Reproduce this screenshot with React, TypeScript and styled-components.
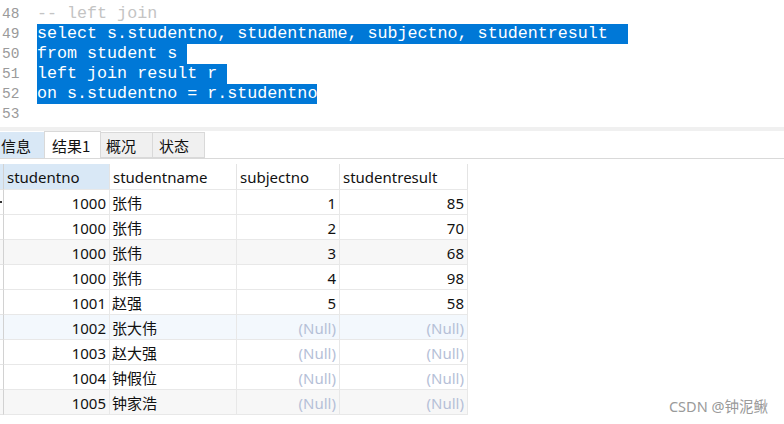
import React from "react";
import styled, { createGlobalStyle } from "styled-components";

const GlobalStyle = createGlobalStyle`
  html, body { margin: 0; padding: 0; background: #fff; }
  body { width: 784px; height: 424px; overflow: hidden; }
`;

const Page = styled.div`
  position: relative;
  width: 784px;
  height: 424px;
  display: flex;
  flex-direction: column;
  background: #fff;
  font-family: "Noto Sans", "Noto Sans CJK SC", sans-serif;
`;

const Editor = styled.div`
  height: 127px;
  padding-top: 4px;
  box-sizing: border-box;
  display: flex;
  flex-direction: column;
`;

const Line = styled.div`
  display: flex;
  align-items: center;
  height: 20px;
`;

const LineNo = styled.span`
  width: 37px;
  padding-left: 2px;
  box-sizing: border-box;
  font-family: "Liberation Mono", monospace;
  font-size: 14.5px;
  color: #9a9a9a;
`;

const Code = styled.span<{ $sel?: boolean; $nl?: boolean; $comment?: boolean }>`
  font-family: "Liberation Mono", monospace;
  font-size: 16.7px;
  line-height: 20px;
  height: 20px;
  white-space: pre;
  color: ${(p) => (p.$sel ? "#ffffff" : p.$comment ? "#c4c4c4" : "#000")};
  background: ${(p) => (p.$sel ? "#0078d7" : "transparent")};
  padding-right: ${(p) => (p.$nl ? "10px" : "0")};
`;

const Band = styled.div`
  height: 4px;
  background: #f0f0f0;
`;

const TabBar = styled.div`
  height: 28px;
  box-sizing: border-box;
  border-bottom: 1px solid #d9d9d9;
  display: flex;
  align-items: flex-end;
  overflow: hidden;
`;

const Tab = styled.div<{ $kind: "hover" | "active" | "idle"; $w: number; $pad: number }>`
  width: ${(p) => p.$w}px;
  height: ${(p) => (p.$kind === "active" ? 28 : 26)}px;
  margin-bottom: ${(p) => (p.$kind === "active" ? -1 : 0)}px;
  box-sizing: border-box;
  padding-left: ${(p) => p.$pad}px;
  display: flex;
  align-items: center;
  font-family: "Noto Sans CJK SC", sans-serif;
  font-size: 15px;
  color: #111;
  white-space: nowrap;
  background: ${(p) =>
    p.$kind === "hover" ? "#d9e8f6" : p.$kind === "active" ? "#fff" : "#f0f0f0"};
  border: ${(p) => (p.$kind === "hover" ? "none" : "1px solid #d9d9d9")};
  border-bottom: ${(p) => (p.$kind === "active" ? "1px solid #fff" : p.$kind === "hover" ? "none" : "1px solid #d9d9d9")};
  border-left: ${(p) => (p.$kind === "idle" ? "none" : undefined)};
`;

const Grid = styled.div`
  margin-top: 5px;
  display: grid;
  grid-template-columns: 4px 106px 127px 103px 128px;
  width: 468px;
`;

const Cell = styled.div<{ $bg?: string; $right?: boolean; $null?: boolean; $head?: boolean }>`
  height: ${(p) => (p.$head ? 26 : 25)}px;
  box-sizing: border-box;
  border-right: 1px solid ${(p) => (p.$head ? "#e4e4e4" : "#e8e8e8")};
  border-bottom: 1px solid #e8e8e8;
  background: ${(p) => p.$bg || "#fff"};
  display: flex;
  align-items: center;
  justify-content: ${(p) => (p.$right ? "flex-end" : "flex-start")};
  padding: ${(p) => (p.$head ? "1px 4px 0 3px" : "1px 3px 0 2px")};
  font-family: "Noto Sans", "Noto Sans CJK SC", sans-serif;
  font-size: 15px;
  color: ${(p) => (p.$null ? "#b5c0d7" : "#111")};
  white-space: nowrap;
  overflow: hidden;
`;

const Strip = styled.div<{ $bg?: string; $head?: boolean }>`
  position: relative;
  height: ${(p) => (p.$head ? 26 : 25)}px;
  box-sizing: border-box;
  border-right: 1px solid #d2d2d2;
  border-bottom: 1px solid #e4e4e4;
  background: ${(p) => p.$bg || "#fff"};
`;

const Marker = styled.span`
  position: absolute;
  left: 0;
  top: 11px;
  width: 2px;
  height: 2px;
  background: #333;
`;

const Watermark = styled.div`
  position: absolute;
  right: 16px;
  bottom: 8px;
  font-family: "Noto Sans", "Noto Sans CJK SC", sans-serif;
  font-size: 14.5px;
  color: #9a9a9a;
`;

type Row = { no: string; name: string; sub: string | null; res: string | null; bg?: string };

const rows: Row[] = [
  { no: "1000", name: "张伟", sub: "1", res: "85" },
  { no: "1000", name: "张伟", sub: "2", res: "70" },
  { no: "1000", name: "张伟", sub: "3", res: "68", bg: "#f7f7f7" },
  { no: "1000", name: "张伟", sub: "4", res: "98" },
  { no: "1001", name: "赵强", sub: "5", res: "58" },
  { no: "1002", name: "张大伟", sub: null, res: null, bg: "#f3f8fd" },
  { no: "1003", name: "赵大强", sub: null, res: null },
  { no: "1004", name: "钟假位", sub: null, res: null },
  { no: "1005", name: "钟家浩", sub: null, res: null, bg: "#f7f7f7" },
];

export default function App() {
  return (
    <Page>
      <GlobalStyle />
      <Editor>
        <Line>
          <LineNo>48</LineNo>
          <Code $comment>-- left join</Code>
        </Line>
        <Line>
          <LineNo>49</LineNo>
          <Code $sel $nl>select s.studentno, studentname, subjectno, studentresult </Code>
        </Line>
        <Line>
          <LineNo>50</LineNo>
          <Code $sel $nl>from student s</Code>
        </Line>
        <Line>
          <LineNo>51</LineNo>
          <Code $sel $nl>left join result r</Code>
        </Line>
        <Line>
          <LineNo>52</LineNo>
          <Code $sel>on s.studentno = r.studentno</Code>
        </Line>
        <Line>
          <LineNo>53</LineNo>
        </Line>
      </Editor>
      <Band />
      <TabBar>
        <Tab $kind="hover" $w={44} $pad={1}>信息</Tab>
        <Tab $kind="active" $w={57} $pad={7}>结果1</Tab>
        <Tab $kind="idle" $w={52} $pad={5}>概况</Tab>
        <Tab $kind="idle" $w={52} $pad={6}>状态</Tab>
      </TabBar>
      <Grid>
        <Strip $head $bg="#d9e8f6" />
        <Cell $head $bg="#d9e8f6">studentno</Cell>
        <Cell $head>studentname</Cell>
        <Cell $head>subjectno</Cell>
        <Cell $head>studentresult</Cell>
        {rows.map((r, i) => (
          <React.Fragment key={i}>
            <Strip $bg={r.bg}>{i === 0 && <Marker />}</Strip>
            <Cell $bg={r.bg} $right>{r.no}</Cell>
            <Cell $bg={r.bg}>{r.name}</Cell>
            <Cell $bg={r.bg} $right $null={r.sub === null}>{r.sub ?? "(Null)"}</Cell>
            <Cell $bg={r.bg} $right $null={r.res === null}>{r.res ?? "(Null)"}</Cell>
          </React.Fragment>
        ))}
      </Grid>
      <Watermark>CSDN @钟泥鳅</Watermark>
    </Page>
  );
}
